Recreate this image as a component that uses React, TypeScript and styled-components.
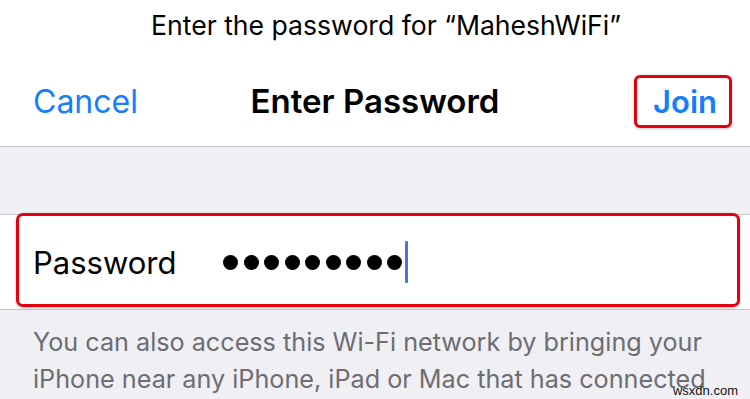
import React from "react";
import styled, { createGlobalStyle } from "styled-components";

const GlobalStyle = createGlobalStyle`
  html, body {
    margin: 0;
    padding: 0;
    background: #ffffff;
  }
  body {
    font-family: "Inter", "Roboto", "Liberation Sans", sans-serif;
    -webkit-font-smoothing: antialiased;
  }
`;

const Screen = styled.div`
  position: relative;
  width: 750px;
  height: 399px;
  overflow: hidden;
  background: #efeff4;
`;

const Header = styled.header`
  background: #ffffff;
  border-bottom: 1px solid #c8c7cc;
  height: 146px;
  display: flex;
  flex-direction: column;
`;

const Prompt = styled.div`
  height: 50px;
  display: flex;
  align-items: center;
  justify-content: center;
  padding-left: 22px;
  font-size: 26.6px;
  color: #000;
`;

const NavBar = styled.nav`
  flex: 1;
  display: grid;
  grid-template-columns: 1fr auto 1fr;
  align-items: center;
  padding: 6px 18px 0;
`;

const NavButton = styled.span<{ $align?: "left" | "right" }>`
  justify-self: ${(p) => (p.$align === "right" ? "end" : "start")};
  margin-left: ${(p) => (p.$align === "right" ? 0 : 15)}px;
  color: #157efb;
  font-size: ${(p) => (p.$align === "right" ? 31 : 32)}px;
  font-weight: ${(p) => (p.$align === "right" ? 600 : 400)};
`;

const Title = styled.h1`
  margin: 0;
  font-size: 33px;
  font-weight: 600;
  color: #000;
`;

const Highlight = styled.span`
  display: inline-block;
  border: 3px solid #e3000f;
  border-radius: 6px;
  padding: 5px 12px 5px 16px;
  box-shadow: 0 1px 3px rgba(0, 0, 0, 0.25);
`;

const Spacer = styled.div`
  height: 67px;
`;

const Cell = styled.div`
  position: relative;
  height: 94px;
  background: #ffffff;
  border-top: 1px solid #c8c7cc;
  border-bottom: 1px solid #c8c7cc;
  display: flex;
  align-items: center;
  padding-left: 33px;
`;

const CellHighlight = styled.div`
  position: absolute;
  left: 16px;
  right: 10px;
  top: -2px;
  bottom: 2px;
  border: 3px solid #e3000f;
  border-radius: 7px;
  box-shadow: 0 1px 3px rgba(0, 0, 0, 0.25);
  pointer-events: none;
`;

const Label = styled.span`
  width: 190px;
  font-size: 31px;
  color: #000;
`;

const Dots = styled.span`
  display: flex;
  align-items: center;
  gap: 5.5px;
`;

const Dot = styled.span`
  width: 15px;
  height: 15px;
  border-radius: 50%;
  background: #000;
`;

const Caret = styled.span`
  width: 3px;
  height: 42px;
  margin-left: -3px;
  border-radius: 1px;
  background: #4a72e0;
`;

const Footer = styled.p`
  margin: 0;
  padding: 14px 30px 0 33px;
  font-size: 25.2px;
  line-height: 37px;
  color: #6d6d72;
`;

const Watermark = styled.span`
  position: absolute;
  right: 12px;
  bottom: 1px;
  font-family: "Liberation Sans", sans-serif;
  font-size: 13px;
  color: #111;
`;

export default function App() {
  return (
    <>
      <GlobalStyle />
      <Screen>
        <Header>
          <Prompt>Enter the password for “MaheshWiFi”</Prompt>
          <NavBar>
            <NavButton $align="left">Cancel</NavButton>
            <Title>Enter Password</Title>
            <NavButton $align="right">
              <Highlight>Join</Highlight>
            </NavButton>
          </NavBar>
        </Header>
        <Spacer />
        <Cell>
          <Label>Password</Label>
          <Dots>
            {Array.from({ length: 9 }).map((_, i) => (
              <Dot key={i} />
            ))}
            <Caret />
          </Dots>
          <CellHighlight />
        </Cell>
        <Footer>
          You can also access this Wi-Fi network by bringing your iPhone near
          any iPhone, iPad or Mac that has connected to this network and has
          you in their contacts.
        </Footer>
        <Watermark>wsxdn.com</Watermark>
      </Screen>
    </>
  );
}
